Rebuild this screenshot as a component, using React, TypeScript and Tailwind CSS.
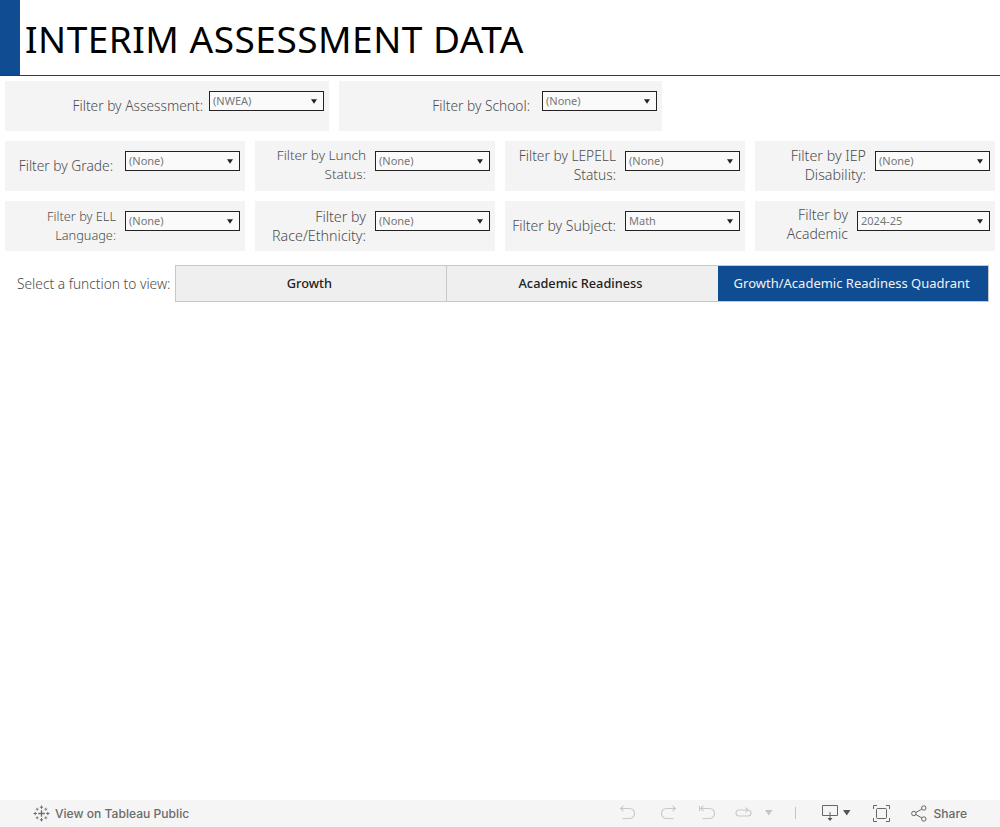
const labelFont = "font-['Noto_Sans',sans-serif]";

function Arrow() {
  return (
    <svg width="6" height="5" viewBox="0 0 6 5" className="shrink-0">
      <path d="M0 0.3h6L3 4.7z" fill="#222" />
    </svg>
  );
}

function Filter({
  label,
  value,
  cardW = "w-[240px]",
  selectW = "w-[115px]",
  gap = "mr-[9px]",
  labelClass = "text-[13.75px] pb-[2px]",
}: {
  label: React.ReactNode;
  value: string;
  cardW?: string;
  selectW?: string;
  gap?: string;
  labelClass?: string;
}) {
  return (
    <div className={`${cardW} h-[50px] bg-[#f4f4f4] flex items-stretch justify-end`}>
      <div className={`${gap} ${labelClass} flex flex-col justify-center text-right leading-[19px] font-light text-[#4d4d4d] ${labelFont}`}>
        {label}
      </div>
      <div className={`${selectW} mr-[5px] mt-[10px] h-[20px] border border-[#222] bg-[#fafafa] flex items-center justify-between pl-[3px] pr-[6px] shrink-0`}>
        <span className={`text-[11px] text-[#777] leading-none -mt-[1px] ${labelFont}`}>{value}</span>
        <Arrow />
      </div>
    </div>
  );
}

function Undo({ flip, bar }: { flip?: boolean; bar?: boolean }) {
  return (
    <svg width="17" height="16" viewBox="0 0 17 16" fill="none" stroke="#c9c9c9" strokeWidth="1.1" className={flip ? "-scale-x-100" : ""}>
      <path d="M1.5 3.5H10.5a5 5 0 0 1 0 10H3.5" />
      <path d="M4.5 0.8L1.5 3.5L4.5 6.2" />
      {bar && <path d="M0.5 0.8V6.2" />}
    </svg>
  );
}

function TableauLogo() {
  return (
    <svg width="17" height="17" viewBox="0 0 17 17" fill="none" stroke="#6d6d6d" strokeWidth="1">
      <path d="M8.5 0.5v3.4M6.9 2.2h3.2" />
      <path d="M8.5 13.1v3.4M6.9 14.8h3.2" />
      <path d="M2.2 6.9v3.2M0.5 8.5h3.4" />
      <path d="M14.8 6.9v3.2M13.1 8.5h3.4" />
      <path d="M8.5 5.2v6.6M5.2 8.5h6.6" strokeWidth="1.3" />
      <path d="M4.2 2.7v3M2.7 4.2h3M12.8 2.7v3M11.3 4.2h3M4.2 11.3v3M2.7 12.8h3M12.8 11.3v3M11.3 12.8h3" strokeWidth="0.8" />
    </svg>
  );
}

export default function App() {
  return (
    <div className="w-[1000px] h-[827px] bg-white flex flex-col overflow-hidden">
      <header className="h-[76px] shrink-0 flex border-b border-[#1d3f63]">
        <div className="w-[20px] bg-[#0f4c92]" />
        <h1 className="ml-[5px] text-[37px] leading-[78px] tracking-[0.5px] text-black font-['Noto_Sans',sans-serif] whitespace-nowrap">
          INTERIM ASSESSMENT DATA
        </h1>
      </header>

      <div className="px-[5px] pt-[5px] flex flex-col gap-[10px]">
        <div className="flex gap-[10px]">
          <Filter cardW="w-[324px]" gap="mr-[6px]" label="Filter by Assessment:" value="(NWEA)" />
          <Filter cardW="w-[323px]" gap="mr-[12px]" label="Filter by School:" value="(None)" />
        </div>
        <div className="flex gap-[10px]">
          <Filter gap="mr-[12px]" label="Filter by Grade:" value="(None)" />
          <Filter labelClass="text-[13.5px] pb-[2px]" label={<>Filter by Lunch<br />Status:</>} value="(None)" />
          <Filter label={<>Filter by LEPELL<br />Status:</>} value="(None)" />
          <Filter labelClass="text-[14.25px] pb-[2px]" label={<>Filter by IEP<br />Disability:</>} value="(None)" />
        </div>
        <div className="flex gap-[10px]">
          <Filter labelClass="text-[12.75px]" label={<>Filter by ELL<br />Language:</>} value="(None)" />
          <Filter labelClass="text-[14.25px]" label={<>Filter by<br />Race/Ethnicity:</>} value="(None)" />
          <Filter labelClass="text-[14px] pb-[2px]" label="Filter by Subject:" value="Math" />
          <Filter labelClass="text-[14px] pb-[4px]" label={<>Filter by<br />Academic</>} selectW="w-[133px]" value="2024-25" />
        </div>
      </div>

      <div className={`mt-[14px] flex items-center ${labelFont}`}>
        <span className="w-[171px] shrink-0 pl-[17px] text-[13.75px] font-light text-[#4d4d4d] whitespace-nowrap pt-[1px]">Select a function to view:</span>
        <div className="ml-[4px] w-[814px] h-[37px] grid grid-cols-3 border border-[#c8c8c8] bg-[#efefef] text-[12.75px] font-medium text-[#222]">
          <div className="flex items-center justify-center border-r border-[#c8c8c8] pr-[3px]">Growth</div>
          <div className="flex items-center justify-center pr-[3px]">Academic Readiness</div>
          <div className="flex items-center justify-center bg-[#0f4c92] text-[#f2f2f2] text-[13px] font-normal pr-[3px] ml-[1px]">Growth/Academic Readiness Quadrant</div>
        </div>
      </div>

      <footer className="mt-auto h-[27px] shrink-0 bg-[#f5f5f5] flex items-center font-['Inter',sans-serif] text-[12.1px] font-medium text-[#6b6b6b]">
        <div className="ml-[33px]"><TableauLogo /></div>
        <span className="ml-[5px] pt-[1px]">View on Tableau Public</span>
        <div className="ml-auto flex items-center">
          <Undo />
          <div className="ml-[24px]"><Undo flip /></div>
          <div className="ml-[22px]"><Undo bar /></div>
          <svg width="17" height="12" viewBox="0 0 17 12" fill="none" stroke="#c9c9c9" strokeWidth="1.1" className="ml-[19px]">
            <path d="M4 3h9a3 3 0 0 1 0 6H4a3 3 0 0 1 0-6" />
            <path d="M10.5 0.6L13 3L10.5 5.4" />
          </svg>
          <svg width="8" height="6" viewBox="0 0 8 6" className="ml-[13px]"><path d="M0 0h7.5L3.75 5.5z" fill="#c4c4c4" /></svg>
          <div className="ml-[22px] w-px h-[12px] bg-[#c4c4c4]" />
          <svg width="16" height="18" viewBox="0 0 16 18" fill="none" stroke="#666" strokeWidth="1" className="ml-[26px]">
            <path d="M0.5 1.5h15v10h-15zM8 8v7" />
            <path d="M5.5 14h5L8 17z" fill="#555" stroke="none" />
          </svg>
          <svg width="8" height="6" viewBox="0 0 8 6" className="ml-[5px]"><path d="M0 0h7.5L3.75 5.5z" fill="#555" /></svg>
          <svg width="17" height="17" viewBox="0 0 17 17" fill="none" stroke="#666" strokeWidth="1" className="ml-[22px]">
            <path d="M0.5 4V0.5h3.5M13 0.5h3.5V4M16.5 13v3.5H13M4 16.5H0.5V13" />
            <rect x="3.5" y="3.5" width="10" height="10" rx="1" />
          </svg>
          <svg width="16" height="17" viewBox="0 0 16 17" fill="none" stroke="#666" strokeWidth="1" className="ml-[21px]">
            <circle cx="2.8" cy="8.5" r="2.2" />
            <circle cx="12.8" cy="3" r="2.2" />
            <circle cx="12.8" cy="14" r="2.2" />
            <path d="M4.8 7.5l6-3.4M4.8 9.5l6 3.4" />
          </svg>
          <span className="ml-[6px] mr-[33px] pt-[1px]">Share</span>
        </div>
      </footer>
    </div>
  );
}
